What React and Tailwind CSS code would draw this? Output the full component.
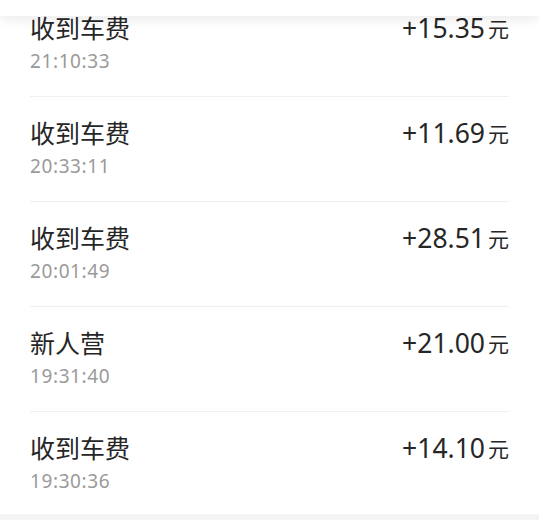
const records = [
  { title: "收到车费", time: "21:10:33", amount: "+15.35" },
  { title: "收到车费", time: "20:33:11", amount: "+11.69" },
  { title: "收到车费", time: "20:01:49", amount: "+28.51" },
  { title: "新人营", time: "19:31:40", amount: "+21.00" },
  { title: "收到车费", time: "19:30:36", amount: "+14.10" },
];

const Row = ({ item, last }) => (
  <div className={`mx-[30px] flex justify-between pt-[20px] ${last ? "pb-[21px]" : "pb-[23px] border-b border-[#f0f0f0]"}`}>
    <div className="flex flex-col">
      <div className="text-[25px] leading-[32px] text-[#262626]">{item.title}</div>
      <div className="mt-[5px] text-[19px] leading-[24px] tracking-[0.6px] text-[#9a9a9a]">{item.time}</div>
    </div>
    <div className="flex h-[32px] items-center text-[#262626]">
      <span className="text-[26.5px] leading-[32px]">{item.amount}</span>
      <span className="ml-[3px] mt-[2px] text-[21px] leading-[32px]">元</span>
    </div>
  </div>
);

export default function App() {
  return (
    <div
      className="relative h-[520px] w-[539px] overflow-hidden bg-[#f4f4f4]"
      style={{ fontFamily: '"Noto Sans", "Noto Sans CJK SC", sans-serif' }}
    >
      <div className="absolute left-0 right-0 top-0 z-10 h-[16px] bg-white shadow-[0_4px_12px_rgba(0,0,0,0.08)]" />
      <div className="-mt-[8px] bg-white">
        {records.map((item, i) => (
          <Row key={i} item={item} last={i === records.length - 1} />
        ))}
      </div>
    </div>
  );
}
